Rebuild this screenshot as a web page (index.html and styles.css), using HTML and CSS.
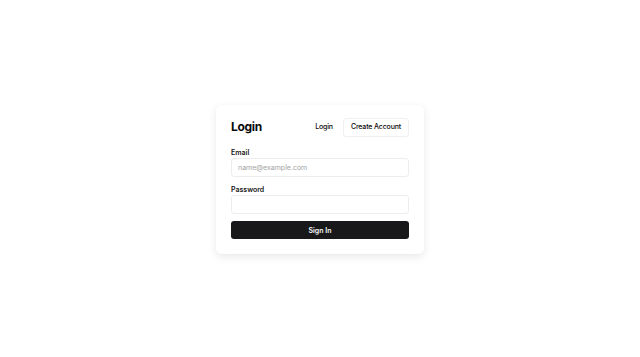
FILE: index.html
```html
<!DOCTYPE html>
<html lang="en">
<head>
<meta charset="utf-8">
<title>Login</title>
<link rel="stylesheet" href="styles.css">
</head>
<body>
<main class="page">
  <section class="card">
    <header class="card-header">
      <h1 class="title">Login</h1>
      <nav class="tabs">
        <button class="tab">Login</button>
        <button class="tab tab-outline">Create Account</button>
      </nav>
    </header>
    <form class="form">
      <div class="field">
        <label class="label" for="email">Email</label>
        <input class="input" id="email" type="email" placeholder="name@example.com">
      </div>
      <div class="field">
        <label class="label" for="password">Password</label>
        <input class="input" id="password" type="password">
      </div>
      <button class="submit" type="button">Sign In</button>
    </form>
  </section>
</main>
</body>
</html>
```
FILE: styles.css
```css
* { box-sizing: border-box; }
html, body { margin: 0; padding: 0; background: #ffffff; }
body {
  font-family: Inter, "Liberation Sans", Arial, sans-serif;
  color: #0a0a0a;
}
.page {
  height: 357px;
  padding-top: 2px;
  display: flex;
  align-items: center;
  justify-content: center;
}
.card {
  width: 208px;
  padding: 13px 15px 15px;
  background: #ffffff;
  border-radius: 5px;
  box-shadow: 0 3px 9px rgba(0, 0, 0, 0.09), 0 0 1px rgba(0, 0, 0, 0.05);
}
.card-header {
  display: flex;
  align-items: center;
  justify-content: space-between;
  height: 18px;
}
.title {
  margin: 0;
  font-size: 12px;
  line-height: 18px;
  font-weight: 700;
  letter-spacing: -0.3px;
}
.tabs {
  display: flex;
  align-items: center;
  gap: 2px;
}
.tab {
  font-family: inherit;
  font-size: 7px;
  line-height: 16px;
  font-weight: 500;
  letter-spacing: -0.15px;
  color: #0a0a0a;
  background: transparent;
  border: 1px solid transparent;
  border-radius: 3px;
  height: 19px;
  padding: 0 7px;
  cursor: pointer;
}
.tab-outline {
  border-color: #f0f0f0;
}
.form {
  margin-top: 13px;
  display: flex;
  flex-direction: column;
}
.field {
  display: flex;
  flex-direction: column;
  gap: 1px;
  margin-bottom: 9px;
}
.field + .field { margin-bottom: 7px; }
.label {
  font-size: 7px;
  font-weight: 600;
  color: #171717;
  line-height: 8px;
  height: 8px;
}
.input {
  display: block;
  height: 19px;
  width: 100%;
  border: 1px solid #ededed;
  border-radius: 3px;
  padding: 0 6px;
  font-family: inherit;
  font-size: 7px;
  color: #0a0a0a;
  background: #ffffff;
  outline: none;
}
.input::placeholder { color: #a3a3a3; }
.submit {
  display: block;
  height: 18px;
  width: 100%;
  border: none;
  border-radius: 3px;
  background: #18181b;
  color: #fafafa;
  font-family: inherit;
  font-size: 7px;
  font-weight: 600;
  cursor: pointer;
}
```
